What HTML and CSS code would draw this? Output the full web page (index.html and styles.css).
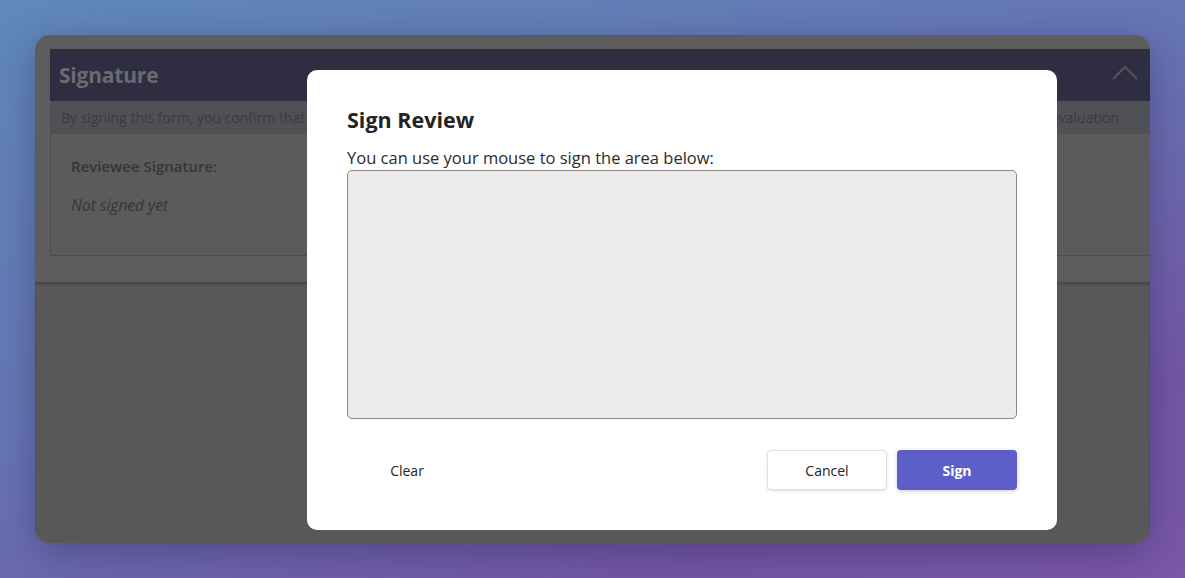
FILE: index.html
```html
<!DOCTYPE html>
<html lang="en">
<head>
  <meta charset="UTF-8" />
  <meta name="viewport" content="width=device-width, initial-scale=1" />
  <title>Sign Review</title>
  <link rel="stylesheet" href="styles.css">
</head>
<body>

  <div class="window">
    <div class="card">
      <div class="card-header">
        <h2>Signature</h2>
        <svg class="chevron" width="26" height="16" viewBox="0 0 26 16">
          <path d="M1 14 L13 2 L25 14" fill="none" stroke="currentColor" stroke-width="2" />
        </svg>
      </div>
      <div class="card-note">
        <span>By signing this form, you confirm that</span>
        <span>evaluation</span>
      </div>
      <div class="card-body">
        <div class="sig-label">Reviewee Signature:</div>
        <div class="sig-value">Not signed yet</div>
      </div>
    </div>
    <div class="lower"></div>

    <div class="modal">
      <h3>Sign Review</h3>
      <label class="pad-label">You can use your mouse to sign the area below:</label>
      <div class="pad"></div>
      <div class="actions">
        <button class="btn btn-text">Clear</button>
        <div class="actions-right">
          <button class="btn btn-default">Cancel</button>
          <button class="btn btn-primary">Sign</button>
        </div>
      </div>
    </div>
  </div>

</body>
</html>
```

FILE: styles.css
```css
body {
  margin: 0;
  height: 100vh;
  overflow: hidden;
  font-family: "Open Sans", "Noto Sans", sans-serif;
  background: linear-gradient(160deg, #6089b9 0%, #6675b5 45%, #7456a6 80%, #7a58aa 100%);
  padding: 35px 0 0 35px;
  box-sizing: border-box;
}
.window {
  position: relative;
  width: 1115px;
  height: 508px;
  border-radius: 15px;
  background: #5d5d5d;
  padding: 14px 0 0 15px;
  box-sizing: border-box;
  overflow: hidden;
  display: flex;
  flex-direction: column;
  box-shadow: 0 10px 40px rgba(30, 20, 60, 0.35);
}
.card {
  background: #5b5b5b;
}
.card-header {
  height: 52px;
  background: #2e2d42;
  display: flex;
  align-items: center;
  justify-content: space-between;
  padding: 0 12px 0 9px;
}
.card-header h2 {
  margin: 0;
  font-size: 21px;
  font-weight: 700;
  color: #6a6a70;
  letter-spacing: -0.2px;
}
.chevron { color: #55555c; margin-top: -4px; }
.card-note {
  height: 33px;
  background: #505157;
  color: #3b3b3d;
  font-size: 14px;
  display: flex;
  align-items: center;
  justify-content: space-between;
  padding: 0 31px 0 11px;
  white-space: nowrap;
  overflow: hidden;
}
.card-body {
  height: 122px;
  border: 1px solid #4c4c4c;
  border-top: none;
  border-right: none;
  box-sizing: border-box;
  padding: 22px 20px;
  color: #363636;
}
.sig-label {
  font-size: 15px;
  font-weight: 600;
}
.sig-value {
  margin-top: 18px;
  font-size: 15.5px;
  font-style: italic;
}
.lower {
  flex: 1;
  margin: 26px 0 0 -15px;
  background: #585858;
  box-shadow: inset 0 3px 3px -1px #454545;
}
.modal {
  position: absolute;
  left: 272px;
  top: 35px;
  width: 750px;
  height: 460px;
  background: #fff;
  border-radius: 10px;
  padding: 35px 40px 40px;
  box-sizing: border-box;
  display: flex;
  flex-direction: column;
}
.modal h3 {
  margin: 0;
  font-size: 21.5px;
  font-weight: 700;
  color: #242424;
  line-height: 29px;
}
.pad-label {
  margin-top: 14px;
  font-size: 16.5px;
  color: #2b2b2b;
  line-height: 20px;
}
.pad {
  margin-top: 2px;
  height: 249px;
  background: #edebe9;
  border: 1px solid #8a8886;
  border-radius: 5px;
  box-sizing: border-box;
}
.actions {
  margin-top: 31px;
  display: flex;
  justify-content: space-between;
}
.actions-right {
  display: flex;
  gap: 10px;
}
.btn {
  width: 120px;
  height: 40px;
  border-radius: 4px;
  font-family: inherit;
  font-size: 14px;
  cursor: pointer;
  color: #242424;
}
.btn-text {
  border: none;
  background: transparent;
}
.btn-default {
  background: #fff;
  border: 1px solid #e0e0e0;
  box-shadow: 0 1px 3px rgba(0, 0, 0, 0.12);
  font-weight: 500;
}
.btn-primary {
  background: #5b5fc7;
  border: none;
  color: #fff;
  font-weight: 700;
  box-shadow: 0 1px 4px rgba(0, 0, 0, 0.2);
}
```
